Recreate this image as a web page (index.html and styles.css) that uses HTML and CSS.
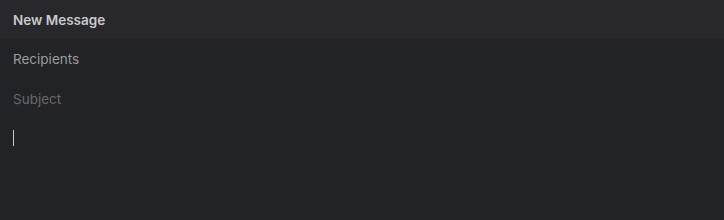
FILE: index.html
```html
<!DOCTYPE html>
<html lang="en">
<head>
    <meta charset="UTF-8">
    <title>New Message</title>
    <link rel="stylesheet" href="styles.css">
</head>
<body>
    <div class="compose">
        <div class="compose-header">New Message</div>
        <div class="field recipients">Recipients</div>
        <div class="field subject">Subject</div>
        <div class="compose-body"><span class="caret"></span></div>
    </div>
</body>
</html>
```
FILE: styles.css
```css
body {
    margin: 0;
    padding: 0;
    background-color: #222326;
    font-family: Inter, "Noto Sans", sans-serif;
    font-size: 13.5px;
}

.compose {
    display: flex;
    flex-direction: column;
    height: 220px;
}

.compose-header {
    height: 39px;
    display: flex;
    align-items: center;
    padding: 0 13px;
    background-color: #28272b;
    color: #c9c9cd;
    font-weight: 600;
}

.field {
    height: 40px;
    display: flex;
    align-items: center;
    padding: 0 13px;
}

.recipients {
    color: #9b9b9d;
}

.subject {
    color: #67676a;
}

.compose-body {
    padding: 11px 13px;
    flex-grow: 1;
}

.caret {
    display: block;
    width: 1px;
    height: 16px;
    background-color: #c8c8c8;
}
```
